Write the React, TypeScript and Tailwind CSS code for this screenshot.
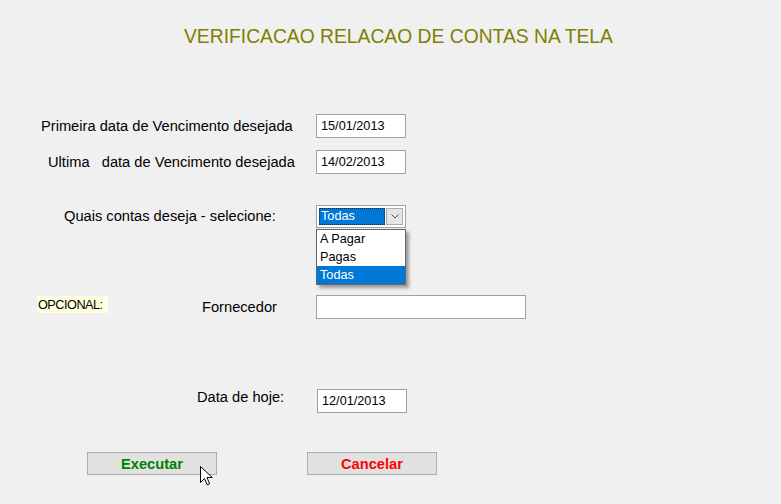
import React from 'react';

const font = { fontFamily: '"Liberation Sans", Arial, sans-serif' };

function TextBox({ value, width }: { value: string; width: string }) {
  return (
    <input
      readOnly
      value={value}
      className={`${width} h-[24px] border border-[#a0a0a0] bg-white pl-[4px] text-[12.7px] text-black outline-none`}
      style={font}
    />
  );
}

function Cursor() {
  return (
    <svg width="13" height="20" viewBox="0 0 13 20" className="absolute left-[200px] top-[466px]">
      <path
        d="M0.5 0.5 L0.5 16.5 L4.5 12.5 L7.2 18.8 L9.6 17.8 L7 11.5 L12.3 11.5 Z"
        fill="white"
        stroke="black"
        strokeWidth="1"
        strokeLinejoin="miter"
      />
    </svg>
  );
}

export default function App() {
  return (
    <div className="relative w-[781px] h-[504px] overflow-hidden bg-[#f0f0f0] text-black" style={font}>
      {/* titulo */}
      <div className="pt-[26px] pl-[184px] text-[19.3px] leading-[22px] text-[#808000] whitespace-nowrap">
        VERIFICACAO RELACAO DE CONTAS NA TELA
      </div>

      {/* datas de vencimento */}
      <div className="mt-[66px] flex items-center">
        <div className="w-[316px] pl-[41px] text-[14.67px] leading-[17px] whitespace-nowrap">Primeira data de Vencimento desejada</div>
        <TextBox value="15/01/2013" width="w-[90px]" />
      </div>
      <div className="mt-[12px] flex items-center">
        <div className="w-[316px] pl-[48px] text-[14.67px] leading-[17px] whitespace-pre">Ultima   data de Vencimento desejada</div>
        <TextBox value="14/02/2013" width="w-[90px]" />
      </div>

      {/* tipo de conta */}
      <div className="mt-[31px] flex items-center">
        <div className="w-[316px] pl-[64px] text-[14.67px] leading-[17px] whitespace-nowrap">Quais contas deseja - selecione:</div>
        <div className="relative">
          <div className="flex w-[90px] h-[23px] items-center border border-[#a0a0a0] bg-white p-[2px] gap-[1px]">
            <div className="flex h-full flex-1 items-center border border-dotted border-[#222] bg-[#0078d7] pl-[1px] text-[12.7px] text-white">
              Todas
            </div>
            <div className="flex h-full w-[17px] items-center justify-center border border-[#adadad] bg-[#e5e5e5]">
              <svg width="8" height="5" viewBox="0 0 8 5">
                <path d="M0.5 0.5 L4 4 L7.5 0.5" fill="none" stroke="#555" strokeWidth="1" />
              </svg>
            </div>
          </div>
          <div className="absolute left-0 top-[24px] w-[90px] border border-[#646464] bg-white text-[12.7px] shadow-[3px_3px_3px_rgba(0,0,0,0.35)]">
            <div className="h-[18px] leading-[18px] pl-[3px]">A Pagar</div>
            <div className="h-[18px] leading-[18px] pl-[3px]">Pagas</div>
            <div className="h-[18px] leading-[18px] pl-[3px] bg-[#0078d7] text-white">Todas</div>
          </div>
        </div>
      </div>

      {/* fornecedor */}
      <div className="mt-[67px] flex items-center">
        <div className="flex w-[316px] items-center pl-[37px]">
          <span className="mb-[5px] h-[17px] w-[71px] bg-[#ffffe0] pl-[1px] pt-[2px] text-[12.7px] leading-[15px] tracking-[-0.5px]">OPCIONAL:</span>
          <span className="ml-[94px] text-[14.67px] leading-[17px]">Fornecedor</span>
        </div>
        <TextBox value="" width="w-[210px]" />
      </div>

      {/* data de hoje */}
      <div className="mt-[69px] flex items-center">
        <div className="mb-[7px] w-[316px] pl-[197px] text-[14.67px] leading-[17px] whitespace-nowrap">Data de hoje:</div>
        <div className="ml-px">
          <TextBox value="12/01/2013" width="w-[90px]" />
        </div>
      </div>

      {/* botoes */}
      <div className="mt-[39px] flex pl-[87px]">
        <button className="h-[23px] w-[130px] border border-[#adadad] bg-[#e1e1e1] text-[14.67px] font-bold text-[#008000]">
          Executar
        </button>
        <button className="ml-[90px] h-[23px] w-[130px] border border-[#adadad] bg-[#e1e1e1] text-[14.67px] font-bold text-[#ff0000]">
          Cancelar
        </button>
      </div>

      <Cursor />
    </div>
  );
}
